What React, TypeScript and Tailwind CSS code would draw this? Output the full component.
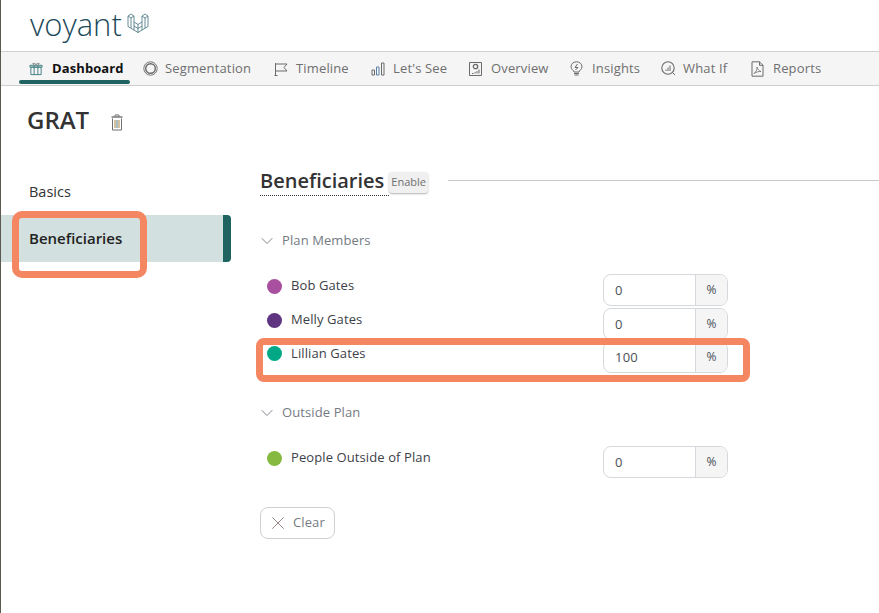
import React from 'react';
import { X, ChevronDown } from 'lucide-react';

const VoyantMark = () => (
  <svg width="22" height="20" viewBox="0 0 22 20" fill="none" stroke="#55808c" strokeWidth="0.9">
    <path d="M1 3 L4 1 L7 3 L4 5 Z M15 3 L18 1 L21 3 L18 5 Z" />
    <path d="M1 3 V13.5 L11 19.5 L21 13.5 V3 M7 3 V9 L11 11.5 L15 9 V3" />
    <path d="M4 5 V15 M18 5 V15 M7 9 V17 M15 9 V17 M11 11.5 V19.5 M7 13 L11 15.5 L15 13" />
  </svg>
);

const BoxIcon = () => (
  <svg width="14" height="14" viewBox="0 0 15 14" fill="none" stroke="#3f7c80" strokeWidth="1">
    <path d="M2 5 H13 V13 H2 Z M1 3 H14 V5 H1 Z M5.5 3 V13 M9.5 3 V13" />
    <path d="M5.5 3 L4 1 H6.5 L7.5 3 L8.5 1 H11 L9.5 3" stroke="#8a8f90" />
  </svg>
);

const RingIcon = () => (
  <svg width="15" height="15" viewBox="0 0 15 15" fill="none" stroke="#6b6b6b">
    <circle cx="7.5" cy="7.5" r="6.7" strokeWidth="0.9" />
    <circle cx="7.5" cy="7.5" r="4.8" strokeWidth="1.4" />
  </svg>
);

const FlagIcon = () => (
  <svg width="14" height="14" viewBox="0 0 14 14" fill="none" stroke="#6b6b6b" strokeWidth="1">
    <path d="M1.5 13.5 V1 M0.5 13.5 H3.5 M1.5 2 H13 L10 5.5 L13 9 H1.5" />
  </svg>
);

const BarsIcon = () => (
  <svg width="14" height="14" viewBox="0 0 14 14" fill="none" stroke="#6b6b6b" strokeWidth="1">
    <path d="M1 8 H3.5 V13 H1 Z" />
    <path d="M5.5 5 H8 V13 H5.5 Z" stroke="#5b82a8" />
    <path d="M10.5 1 H13 V13 H10.5 Z" />
  </svg>
);

const OverviewIcon = () => (
  <svg width="13" height="14" viewBox="0 0 13 14" fill="none" stroke="#6b6b6b" strokeWidth="1">
    <path d="M0.5 0.5 H12.5 V13.5 H0.5 Z" />
    <circle cx="6.5" cy="4.5" r="2.2" strokeWidth="1.3" />
    <path d="M3 11.5 H4.5 M6 11.5 V10 M8 11.5 V9 M10 11.5 V7.5" />
  </svg>
);

const BulbIcon = () => (
  <svg width="13" height="16" viewBox="0 0 13 16" fill="none" stroke="#6b6b6b" strokeWidth="1">
    <path d="M4 11 C4 9.5 1 8.5 1 5.8 C1 2.8 3.4 0.8 6.5 0.8 C9.6 0.8 12 2.8 12 5.8 C12 8.5 9 9.5 9 11 Z" />
    <path d="M7.5 3 L5 6.5 H8 L5.5 9" />
    <path d="M4 12.5 H9 M4.5 14 H8.5" strokeWidth="1.2" />
  </svg>
);

const WhatIfIcon = () => (
  <svg width="15" height="15" viewBox="0 0 15 15" fill="none" stroke="#6b6b6b" strokeWidth="1">
    <circle cx="7" cy="7" r="6.2" strokeWidth="1.1" />
    <path d="M11.5 11.5 L14 14 M5 10 V8.5 M7 10 V6.5 M9 10 V4.5" />
  </svg>
);

const PdfIcon = () => (
  <svg width="13" height="16" viewBox="0 0 13 16" fill="none" stroke="#6b6b6b" strokeWidth="1">
    <path d="M1 0.8 H8.5 L12 4.3 V15.2 H1 Z M8.5 0.8 V4.3 H12" />
    <path d="M3 12.5 C5 11 6.5 8 6 6 C6.5 8 8 10 10 10.5 C8 10.3 5 11 3 12.5 Z" strokeWidth="0.8" />
  </svg>
);

const TrashIcon = () => (
  <svg width="12" height="17" viewBox="0 0 12 17" fill="none" stroke="#6f6f6f" strokeWidth="1">
    <path d="M4 2.5 V1 H8 V2.5" />
    <path d="M0.5 3 H11.5" strokeWidth="1.4" />
    <path d="M1.5 4.5 V16 H10.5 V4.5" />
    <path d="M4 6 V14" stroke="#b79a5e" strokeWidth="1.2" />
    <path d="M6 6 V14" stroke="#6f8f9f" strokeWidth="1.2" />
    <path d="M8 6 V14" stroke="#b79a5e" strokeWidth="1.2" />
  </svg>
);

const navItems = [
  { label: 'Segmentation', icon: <RingIcon />, width: 'w-[131px]' },
  { label: 'Timeline', icon: <FlagIcon />, width: 'w-[97px]' },
  { label: "Let's See", icon: <BarsIcon />, width: 'w-[98px]' },
  { label: 'Overview', icon: <OverviewIcon />, width: 'w-[101px]' },
  { label: 'Insights', icon: <BulbIcon />, width: 'w-[91px]' },
  { label: 'What If', icon: <WhatIfIcon />, width: 'w-[90px]' },
  { label: 'Reports', icon: <PdfIcon />, width: 'w-[90px]' },
];

const PercentInput = ({ value }: { value: string }) => (
  <div className="flex h-[32px] w-[125px] overflow-hidden rounded-lg border border-[#d5d8dc] bg-white">
    <div className="flex flex-1 items-center pl-[11px] pt-px text-[13px] tracking-[0.2px] text-[#4a4f55]">{value}</div>
    <div className="flex w-[32px] items-center justify-center border-l border-[#d5d8dc] bg-[#f5f5f5] text-[12px] text-[#4a4f55]">%</div>
  </div>
);

const Member = ({ name, color, value, height, nameTop = 'mt-px' }: { name: string; color: string; value: string; height: string; nameTop?: string }) => (
  <div className={`flex items-start pl-[7px] ${height}`}>
    <span className={`mt-[5px] h-[15px] w-[15px] rounded-full ${color}`} />
    <span className={`ml-[9px] w-[312px] text-[13px] leading-[20px] tracking-[0.1px] text-[#3c4148] ${nameTop}`}>{name}</span>
    <PercentInput value={value} />
  </div>
);

const GroupHeader = ({ label }: { label: string }) => (
  <div className="flex h-[20px] items-center text-[13px] tracking-[0.1px] text-[#757b82]">
    <ChevronDown className="-ml-[3px] h-[20px] w-[20px]" strokeWidth={1.1} color="#757b82" />
    <span className="ml-[5px]">{label}</span>
  </div>
);

export default function App() {
  return (
    <div className="relative h-[613px] w-[879px] overflow-hidden bg-white font-['Open_Sans',sans-serif] text-[#333]">
      {/* header */}
      <div className="flex h-[51px] items-start pl-[30px]">
        <span className="text-[31px] font-light leading-[49px] text-[#1d4a59]">voyant</span>
        <span className="ml-[5px] mt-[13px]"><VoyantMark /></span>
      </div>

      {/* nav */}
      <div className="flex h-[35px] items-stretch border-y border-[#cfcfcf] bg-[#f5f5f5] pl-[19px]">
        <div className="flex w-[111px] flex-col">
          <div className="flex flex-1 items-center gap-[9px] pl-[10px] pt-[5px] text-[13px] font-bold tracking-[0.1px] text-[#111]">
            <BoxIcon />
            Dashboard
          </div>
          <div className="mb-px h-[4px] rounded-full bg-[#1f6461]" />
        </div>
        <div className="flex pl-[13px]">
          {navItems.map((item) => (
            <div key={item.label} className={`flex items-center text-[13px] tracking-[0.15px] text-[#6f6f6f] ${item.width}`}>
              <span className="flex w-[22px] shrink-0 items-center">{item.icon}</span>
              {item.label}
            </div>
          ))}
        </div>
      </div>

      {/* title */}
      <div className="flex h-[72px] items-center pb-[4px] pl-[27px]">
        <h1 className="text-[24px] font-semibold leading-none text-[#333]">GRAT</h1>
        <span className="ml-[22px] mt-[5px]"><TrashIcon /></span>
      </div>

      <div className="flex">
        {/* side menu */}
        <div className="w-[231px] pt-[21px]">
          <div className="h-[36px] pl-[29px] text-[14.5px] leading-[26px] text-[#333]">Basics</div>
          <div className="flex h-[47px] items-center rounded-r-[4px] border-r-[8px] border-[#1f6461] bg-[#d2e0df] pl-[29px] text-[15px] font-semibold text-[#222]">
            Beneficiaries
          </div>
        </div>

        {/* content */}
        <div className="ml-[29px] flex-1">
          <div className="flex items-start pt-[10px]">
            <h2 className="h-[28px] border-b border-dotted border-[#333] pr-[5px] text-[20px] font-semibold leading-[26px] text-[#333]">Beneficiaries</h2>
            <span className="mt-[4px] flex h-[21px] items-center rounded-[3px] bg-[#f0f0f0] px-[2px] text-[11px] text-[#6f6f6f] shadow-[0_1px_2px_rgba(0,0,0,0.3)]">Enable</span>
            <div className="ml-[20px] mt-[12px] h-px flex-1 bg-[#c8c8c8]" />
          </div>

          <div className="mt-[35px]"><GroupHeader label="Plan Members" /></div>
          <div className="mt-[23px]">
            <Member name="Bob Gates" color="bg-[#a94f9f]" value="0" height="h-[34px]" />
            <Member name="Melly Gates" color="bg-[#5f3581]" value="0" height="h-[33px]" />
            <Member name="Lillian Gates" color="bg-[#00a888]" value="100" height="h-[34px]" nameTop="mt-[2px]" />
          </div>

          <div className="mt-[28px]"><GroupHeader label="Outside Plan" /></div>
          <div className="mt-[23px]">
            <Member name="People Outside of Plan" color="bg-[#86b93f]" value="0" height="h-[34px]" />
          </div>

          <button className="mt-[27px] flex h-[32px] w-[75px] items-center rounded-lg border border-[#d0d0d0] pl-[6px] text-[13px] tracking-[0.1px] text-[#757b82]">
            <X className="h-[22px] w-[22px]" strokeWidth={1} color="#8f7f7a" />
            <span className="ml-[4px]">Clear</span>
          </button>
        </div>
      </div>

      {/* annotations */}
      <div className="absolute left-[12px] top-[211px] h-[67px] w-[135px] rounded-[10px] border-[7px] border-[#f58662]" />
      <div className="absolute left-[256px] top-[338px] h-[44px] w-[494px] rounded-[8px] border-[7px] border-[#f58662]" />
      {/* page edge */}
      <div className="absolute left-0 top-0 h-full w-px bg-[#5c5a50]" />
    </div>
  );
}
